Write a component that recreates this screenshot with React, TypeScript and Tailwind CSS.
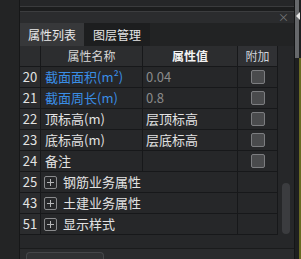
import React from "react";

type Row = {
  no: string;
  name: string;
  value?: string;
  kind: "blue" | "plain" | "group";
  dim?: boolean;
  check?: boolean;
};

const rows: Row[] = [
  { no: "20", name: "截面面积(m²)", value: "0.04", kind: "blue", dim: true, check: true },
  { no: "21", name: "截面周长(m)", value: "0.8", kind: "blue", dim: true, check: true },
  { no: "22", name: "顶标高(m)", value: "层顶标高", kind: "plain", check: true },
  { no: "23", name: "底标高(m)", value: "层底标高", kind: "plain", check: true },
  { no: "24", name: "备注", value: "", kind: "plain", check: true },
  { no: "25", name: "钢筋业务属性", kind: "group" },
  { no: "43", name: "土建业务属性", kind: "group" },
  { no: "51", name: "显示样式", kind: "group" },
];

function PlusBox() {
  return (
    <span className="relative flex h-[13px] w-[13px] shrink-0 items-center justify-center rounded-[2px] border border-[#8a8b8d]">
      <span className="absolute h-[1px] w-[7px] bg-[#b5b6b8]" />
      <span className="absolute h-[7px] w-[1px] bg-[#b5b6b8]" />
    </span>
  );
}

function Check() {
  return <span className="h-[14px] w-[14px] rounded-[2px] border border-[#7c7d80] bg-[#4a4b4d]" />;
}

export default function App() {
  const cell = "h-[21px] border-b border-r border-[#17181a]";

  return (
    <div
      className="flex h-[259px] w-[301px] overflow-hidden bg-[#1f2021] text-[12px] text-[#e2e2e2]"
      style={{ fontFamily: '"Noto Sans CJK SC", "Noto Sans", sans-serif' }}
    >
      {/* left strip */}
      <div className="w-[20px] shrink-0 border-r border-[#161718] bg-[#232425]" />

      {/* main panel */}
      <div className="flex w-[274px] shrink-0 flex-col">
        <div className="h-[7px] border-b border-[#3a3b3d] bg-[#252628]" />
        <div className="h-[4px] bg-[#1c1d1e]" />
        <div className="flex h-[12px] items-center justify-end border-t border-[#3c3d3f] bg-[#2b2c2e] pr-[5px]">
          <span className="text-[11px] leading-none text-[#76777a]">×</span>
        </div>

        {/* tabs */}
        <div className="flex h-[23px] bg-[#222324]">
          <div className="flex w-[64px] items-center justify-center bg-[#37383a] text-[#eaeaea]">属性列表</div>
          <div className="flex w-[66px] items-center justify-center bg-[#1d1e1f] text-[#e6e6e6]">图层管理</div>
        </div>

        {/* table */}
        <div className="flex bg-[#262729]">
          <div className="grid w-[258px] grid-cols-[21px_102px_95px_40px]">
            <div className={`${cell} bg-[#2c2d2f]`} />
            <div className={`${cell} flex items-center justify-center bg-[#2c2d2f] text-[#d6d6d6]`}>属性名称</div>
            <div className={`${cell} flex items-center justify-center bg-[#2c2d2f] font-bold text-[#f2f2f2]`}>属性值</div>
            <div className={`${cell} flex items-center justify-center bg-[#303134] text-[#cfd3da]`}>附加</div>

            {rows.map((r) => (
              <React.Fragment key={r.no}>
                <div className={`${cell} flex items-center justify-center bg-[#2b2c2e] text-[13px] text-[#e4e4e4]`}>{r.no}</div>
                {r.kind === "group" ? (
                  <div className={`${cell} col-span-2 flex items-center gap-[6px] pl-[3px] text-[13px] text-[#e2e2e2]`}>
                    <PlusBox />
                    <span>{r.name}</span>
                  </div>
                ) : (
                  <>
                    <div
                      className={`${cell} flex items-center pl-[4px] text-[13px] ${
                        r.kind === "blue" ? "text-[#3a8ee6]" : "text-[#e2e2e2]"
                      }`}
                    >
                      {r.name}
                    </div>
                    <div className={`${cell} flex items-center pl-[3px] text-[13px] ${r.dim ? "text-[#8b8b8b]" : "text-[#e2e2e2]"}`}>
                      {r.value}
                    </div>
                  </>
                )}
                <div className={`${cell} flex items-center justify-center`}>{r.check && <Check />}</div>
              </React.Fragment>
            ))}
          </div>

          {/* table scrollbar */}
          <div className="flex w-[16px] flex-col items-center justify-end pb-[1px]">
            <div className="h-[51px] w-[8px] rounded-full bg-[#3b3c3f]" />
          </div>
        </div>

        <div className="h-[14px] border-b border-[#1a1b1c] bg-[#262729]" />
        <div className="flex flex-1 items-end bg-[#2a2b2d] pl-[6px]">
          <div className="h-[7px] w-[78px] rounded-t-[4px] border border-b-0 border-[#454649] bg-[#303133]" />
        </div>
      </div>

      {/* right strip */}
      <div className="relative flex w-[7px] shrink-0 border-l border-[#141516] bg-[#1e1f20]">
        <div className="relative h-[58px] w-[5px] bg-[#66686b]">
          <span className="absolute left-[1px] top-[12px] h-0 w-0 border-y-[4px] border-r-[4px] border-y-transparent border-r-[#e6e6e6]" />
        </div>
        <div className="mt-[58px] h-[201px] w-[2px] bg-[#6a6a22]" />
      </div>
    </div>
  );
}
